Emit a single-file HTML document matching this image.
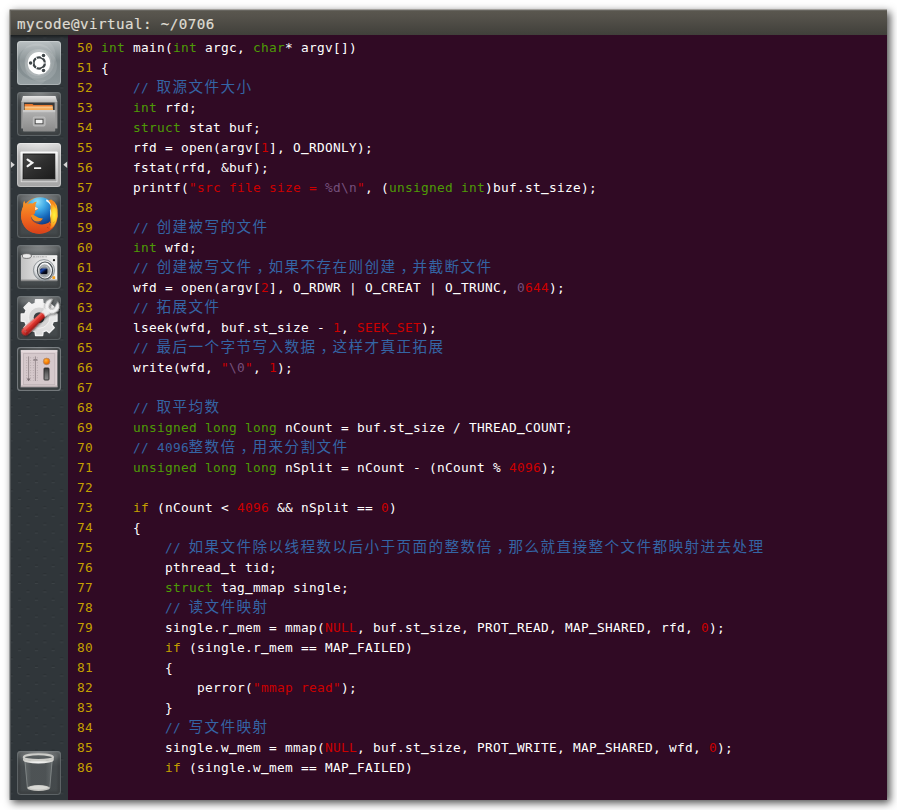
<!DOCTYPE html>
<html lang="zh">
<head>
<meta charset="utf-8">
<title>mycode@virtual: ~/0706</title>
<style>
html,body{margin:0;padding:0;background:#fff;}
body{width:897px;height:810px;position:relative;overflow:hidden;}
#shadow{position:absolute;left:11px;top:11px;width:876px;height:789px;background:#300a24;
  box-shadow:2px 2px 8px 1px rgba(0,0,0,.7);}
#title{position:absolute;left:9px;top:9px;width:878px;height:26px;
  background:linear-gradient(#5b5850,#55524b 30%,#403f3a);}
#tedge1{position:absolute;left:9px;top:9px;width:878px;height:1px;background:rgba(255,255,255,.45);}
#tedge2{position:absolute;left:9px;top:10px;width:878px;height:1px;background:#67655f;}
#tedge3{position:absolute;left:9px;top:9px;width:1px;height:26px;background:rgba(255,255,255,.45);}
#tedge4{position:absolute;left:10px;top:10px;width:1px;height:25px;background:#67655f;}
#title span{position:absolute;left:8px;top:1.5px;-webkit-text-stroke:.2px #dfdbd2;line-height:27px;color:#dfdbd2;
  font-family:"DejaVu Sans Mono","Liberation Mono",monospace;font-size:14.2px;letter-spacing:0.45px;white-space:pre;}
#lsvg{position:absolute;left:9px;top:35px;}
#term{position:absolute;left:68px;top:35px;width:819px;height:765px;background:#300a24;overflow:hidden;}
#code{position:absolute;left:9px;top:3px;color:#fff;
  font-family:"DejaVu Sans Mono","Liberation Mono","Noto Sans CJK SC",monospace;font-size:12.8px;letter-spacing:.2938px;}
.l{height:20px;line-height:20px;white-space:pre;}
.n{color:#c4a000;}
.g{color:#4e9a06;}
.b{color:#3465a4;}
.r{color:#cc0000;}
.m{color:#75507b;}
.y{color:#c4a000;}
.c{font-family:"Noto Sans CJK SC","WenQuanYi Zen Hei",sans-serif;font-size:14.6px;letter-spacing:1.4px;line-height:1px;position:relative;left:-.4px;top:.4px;}
.k{position:relative;left:4px;}
.u{position:relative;top:-1.5px;font-weight:bold;}
</style>
</head>
<body>
<div id="shadow"></div>
<div id="title"><span>mycode@virtual: ~/0706</span></div>
<div id="tedge1"></div><div id="tedge2"></div><div id="tedge3"></div><div id="tedge4"></div>
<svg id="lsvg" width="59" height="765" viewBox="9 35 59 765">
<defs>
<linearGradient id="tdark" x1="0" y1="0" x2="0" y2="1"><stop offset="0" stop-color="#5d6264"/><stop offset=".35" stop-color="#454a4d"/><stop offset="1" stop-color="#44494b"/></linearGradient>
<radialGradient id="tglow" cx=".5" cy="0" r=".6" gradientTransform="translate(0 0) scale(1 .5)"><stop offset="0" stop-color="#fff" stop-opacity=".38"/><stop offset="1" stop-color="#fff" stop-opacity="0"/></radialGradient>
<linearGradient id="tbfb" x1="0" y1="0" x2="0" y2="1"><stop offset="0" stop-color="#b4bbbd"/><stop offset=".45" stop-color="#7e888b"/><stop offset="1" stop-color="#8d979a"/></linearGradient>
<linearGradient id="tlight" x1="0" y1="0" x2="0" y2="1"><stop offset="0" stop-color="#d6d6d6"/><stop offset=".3" stop-color="#b4b4b4"/><stop offset="1" stop-color="#a6a6a6"/></linearGradient>
<linearGradient id="lid" x1="0" y1="0" x2="0" y2="1"><stop offset="0" stop-color="#e6e6e6"/><stop offset="1" stop-color="#b9b9b9"/></linearGradient>
<linearGradient id="drawer" x1="0" y1="0" x2="0" y2="1"><stop offset="0" stop-color="#c2c2c2"/><stop offset=".15" stop-color="#ababab"/><stop offset="1" stop-color="#8a8a8a"/></linearGradient>
<linearGradient id="folder" x1="0" y1="0" x2="0" y2="1"><stop offset="0" stop-color="#e0702c"/><stop offset=".45" stop-color="#f08c3c"/><stop offset=".55" stop-color="#f8b870"/><stop offset="1" stop-color="#f4a652"/></linearGradient>
<linearGradient id="tframe" x1="0" y1="0" x2="0" y2="1"><stop offset="0" stop-color="#f4f4f4"/><stop offset="1" stop-color="#9c9c9c"/></linearGradient>
<linearGradient id="tscreen" x1="0" y1="0" x2="1" y2="1"><stop offset="0" stop-color="#4a4a4a"/><stop offset=".5" stop-color="#2e2e2e"/><stop offset="1" stop-color="#1c1c1c"/></linearGradient>
<radialGradient id="globe" cx=".4" cy=".15" r=".95"><stop offset="0" stop-color="#8fe0fa"/><stop offset=".3" stop-color="#3fa9e6"/><stop offset=".6" stop-color="#1565b8"/><stop offset="1" stop-color="#0a1f5c"/></radialGradient>
<linearGradient id="fox" x1="0" y1="0" x2="0" y2="1"><stop offset="0" stop-color="#f89a2a"/><stop offset=".5" stop-color="#f06c1e"/><stop offset="1" stop-color="#d9421a"/></linearGradient>
<radialGradient id="tail" gradientUnits="userSpaceOnUse" cx="54.2" cy="215" r="13" gradientTransform="translate(54.2 215) scale(.42 1) translate(-54.2 -215)"><stop offset="0" stop-color="#fff03c"/><stop offset=".45" stop-color="#ffd22e"/><stop offset="1" stop-color="#f58a1e"/></radialGradient>
<linearGradient id="cam" x1="0" y1="0" x2="1" y2="0"><stop offset="0" stop-color="#c2c2c2"/><stop offset=".45" stop-color="#dedede"/><stop offset="1" stop-color="#f0f0f0"/></linearGradient>
<radialGradient id="lens" cx=".5" cy=".4" r=".6"><stop offset="0" stop-color="#ffffff"/><stop offset=".7" stop-color="#e2e4e6"/><stop offset="1" stop-color="#9aa0a6"/></radialGradient>
<linearGradient id="lensglass" x1="0" y1="0" x2="1" y2="1"><stop offset="0" stop-color="#0a1440"/><stop offset=".3" stop-color="#1848b0"/><stop offset=".6" stop-color="#050a20"/><stop offset="1" stop-color="#000"/></linearGradient>
<linearGradient id="gearg" x1="0" y1="0" x2="0" y2="1"><stop offset="0" stop-color="#f6f6f6"/><stop offset="1" stop-color="#dcdcdc"/></linearGradient>
<linearGradient id="wr" x1="0" y1="0" x2="0" y2="1"><stop offset="0" stop-color="#ee5048"/><stop offset=".5" stop-color="#d8302a"/><stop offset="1" stop-color="#b02020"/></linearGradient>
<radialGradient id="led" cx=".4" cy=".35" r=".7"><stop offset="0" stop-color="#ffb43c"/><stop offset=".6" stop-color="#f57a00"/><stop offset="1" stop-color="#c85a00"/></radialGradient>
<linearGradient id="sw" x1="0" y1="0" x2="0" y2="1"><stop offset="0" stop-color="#333"/><stop offset=".5" stop-color="#6a6a6a"/><stop offset="1" stop-color="#8c8c8c"/></linearGradient>
<linearGradient id="rim" x1="0" y1="0" x2="0" y2="1"><stop offset="0" stop-color="#c9c9c5"/><stop offset=".5" stop-color="#e9e9e6"/><stop offset="1" stop-color="#b4b4b0"/></linearGradient>
<linearGradient id="bin" x1="0" y1="0" x2="1" y2="0"><stop offset="0" stop-color="#7e8484" stop-opacity=".55"/><stop offset=".25" stop-color="#565b5d" stop-opacity=".5"/><stop offset=".75" stop-color="#565b5d" stop-opacity=".5"/><stop offset="1" stop-color="#7e8484" stop-opacity=".55"/></linearGradient>
<radialGradient id="rimf" cx=".5" cy="1" r=".6"><stop offset="0" stop-color="#ffffff"/><stop offset="1" stop-color="#cfcfcb"/></radialGradient>
<pattern id="dots" x="9.2" y="35.5" width="16.8" height="16.8" patternUnits="userSpaceOnUse"><rect x="0.5" y="0" width="3" height="1" fill="#000" fill-opacity=".12"/><rect x="0.5" y="1.6" width="3" height=".8" fill="#fff" fill-opacity=".07"/><rect x="8.9" y="8.4" width="3" height="1" fill="#000" fill-opacity=".12"/><rect x="8.9" y="10" width="3" height=".8" fill="#fff" fill-opacity=".07"/></pattern>
<linearGradient id="topsh" x1="0" y1="0" x2="0" y2="1"><stop offset="0" stop-color="#000" stop-opacity=".45"/><stop offset="1" stop-color="#000" stop-opacity="0"/></linearGradient>
<linearGradient id="leftedge" x1="0" y1="0" x2="1" y2="0"><stop offset="0" stop-color="#30363a" stop-opacity=".12"/><stop offset=".5" stop-color="#33383b" stop-opacity=".55"/><stop offset="1" stop-color="#30363a" stop-opacity="1"/></linearGradient>
<filter id="b1" x="-20%" y="-20%" width="140%" height="140%"><feGaussianBlur stdDeviation="1"/></filter>
<filter id="ds" x="-30%" y="-30%" width="160%" height="160%"><feGaussianBlur in="SourceAlpha" stdDeviation=".9"/><feOffset dx=".3" dy=".8"/><feComponentTransfer><feFuncA type="linear" slope=".8"/></feComponentTransfer><feMerge><feMergeNode/><feMergeNode in="SourceGraphic"/></feMerge></filter>
</defs>
<rect x="11" y="35" width="57" height="765" fill="#30363a"/>
<rect x="11" y="35" width="57" height="765" fill="url(#dots)"/>
<rect x="9" y="35" width="2" height="765" fill="url(#leftedge)"/>
<rect x="11" y="35" width="57" height="4" fill="url(#topsh)"/>

<g>
<rect x="17" y="41" width="44" height="44" rx="3.5" fill="url(#tbfb)"/>
<clipPath id="c1"><rect x="17" y="41" width="44" height="44" rx="3.5"/></clipPath>
<g clip-path="url(#c1)"><path d="M17 62 Q18 47 36 46 Q53 46 55 62 Q58 48 48 41 L17 41 Z" fill="#fff" fill-opacity=".10"/><circle cx="37" cy="61" r="17.5" fill="#fff" fill-opacity=".12"/><circle cx="41" cy="65.5" r="16" fill="#fff" fill-opacity=".12"/><circle cx="38" cy="62.5" r="13.4" fill="#fff" fill-opacity=".16"/><path d="M17 85 L17 68 Q26 84 46 80 Q40 88 30 85 Z" fill="#fff" fill-opacity=".10"/></g>
<rect x="17.5" y="41.5" width="43" height="43" rx="3" fill="none" stroke="#fff" stroke-opacity=".25"/>
<circle cx="39" cy="63.2" r="11.2" fill="#fff"/>
<circle cx="39.2" cy="63.0" r="5.7" fill="none" stroke="#3e4548" stroke-width="2.3"/>
<circle cx="43.50" cy="55.55" r="2.7" fill="#fff"/>
<circle cx="43.50" cy="55.55" r="1.75" fill="#3e4548"/>
<circle cx="30.60" cy="63.00" r="2.7" fill="#fff"/>
<circle cx="30.60" cy="63.00" r="1.75" fill="#3e4548"/>
<circle cx="43.50" cy="70.45" r="2.7" fill="#fff"/>
<circle cx="43.50" cy="70.45" r="1.75" fill="#3e4548"/>
<line x1="37.30" y1="66.29" x2="35.40" y2="69.58" stroke="#fff" stroke-width="1"/>
<line x1="43.00" y1="63.00" x2="46.80" y2="63.00" stroke="#fff" stroke-width="1"/>
<line x1="37.30" y1="59.71" x2="35.40" y2="56.42" stroke="#fff" stroke-width="1"/>
</g>
<g><rect x="17" y="92" width="44" height="44" rx="3.5" fill="url(#tdark)"/><rect x="17" y="92" width="44" height="44" rx="3.5" fill="url(#tglow)"/><rect x="19" y="94.0" width="40" height="40" rx="2.5" fill="none" stroke="#000" stroke-opacity=".16" stroke-width="2.4" filter="url(#b1)"/><rect x="17.5" y="92.5" width="43" height="43" rx="3" fill="none" stroke="#70767a" stroke-opacity=".6"/>
<rect x="21.2" y="101.5" width="36.2" height="27" fill="#9a9a9a"/>
<path d="M23 96 H55.5 L57.4 102 H21.2 Z" fill="url(#lid)"/>
<rect x="24" y="102.6" width="30.6" height="8" fill="#3a3a3a"/>
<path d="M24.6 104 H32.5 L33.5 105 H52.5 L53.2 110.4 H24.6 Z" fill="url(#folder)"/>
<rect x="24.6" y="106.6" width="28.4" height=".8" fill="#fde3c0" fill-opacity=".8"/>
<rect x="23" y="110.3" width="32.2" height="21.2" rx=".8" fill="url(#drawer)"/>
<rect x="23" y="110.3" width="32.2" height="1.2" fill="#d8d8d8"/>
<rect x="33.3" y="117" width="11.8" height="9" rx="1.4" fill="#b2b2b2" stroke="#c4c4c4" stroke-width=".8"/>
<rect x="35.2" y="119.2" width="7.8" height="4.6" fill="#f2f2f2" stroke="#444" stroke-width=".9"/>
</g>
<g>
<rect x="17" y="143" width="44" height="44" rx="3.5" fill="url(#tlight)"/>
<rect x="17" y="143" width="44" height="44" rx="3.5" fill="url(#tglow)"/>
<rect x="17.5" y="143.5" width="43" height="43" rx="3" fill="none" stroke="#fff" stroke-opacity=".3"/>
<rect x="20.5" y="151.6" width="37.2" height="31" rx="1" fill="url(#tframe)"/>
<rect x="21.2" y="152.4" width="35.8" height="29.4" fill="none" stroke="#fff" stroke-opacity=".7" stroke-width=".9"/>
<rect x="23.2" y="154" width="31.6" height="24.8" fill="url(#tscreen)" stroke="#111" stroke-width=".8"/>
<path d="M27.6 159.6 L32.3 162.8 L27.6 166.2" fill="none" stroke="#f4f4f4" stroke-width="2.2" stroke-linecap="round" stroke-linejoin="miter"/>
<rect x="34" y="167.2" width="7.2" height="1.8" rx=".6" fill="#f4f4f4"/>
<path d="M10.9 161.6 L14.8 164.8 L10.9 168 Z" fill="#d6d6d6"/>
<path d="M67.2 161.6 L63.3 164.8 L67.2 168 Z" fill="#d6d6d6"/>
</g>
<g><rect x="17" y="194" width="44" height="44" rx="3.5" fill="url(#tdark)"/><rect x="17" y="194" width="44" height="44" rx="3.5" fill="url(#tglow)"/><rect x="19" y="196.0" width="40" height="40" rx="2.5" fill="none" stroke="#000" stroke-opacity=".16" stroke-width="2.4" filter="url(#b1)"/><rect x="17.5" y="194.5" width="43" height="43" rx="3" fill="none" stroke="#70767a" stroke-opacity=".6"/>
<circle cx="39.3" cy="215.7" r="18.3" fill="url(#fox)"/>
<circle cx="40.2" cy="212.2" r="15" fill="url(#globe)"/>
<path d="M51.2 199.4 Q55.2 201.4 56.8 205.6 Q58.2 210 57.6 216.5 Q56.8 222 53.6 226.6 Q51.6 228.6 50.2 228.4 Q51 225 50.6 222 Q50.6 219 50 215.5 Q51.2 211 50.4 207 Q50.8 203 48.2 200.6 Z" fill="url(#tail)"/>
<path d="M46.6 199.2 Q50.6 201.6 51.4 206.4 Q49.8 203 46 201 Z" fill="#fff" fill-opacity=".92"/>
<path d="M50.6 208.5 Q52 213 50.8 218 Q49.9 213.5 50 210.5 Z" fill="#fff" fill-opacity=".75"/>
<path d="M52.6 201.2 Q55.4 204.2 55.8 208.6 Q54 204.8 52 203 Z" fill="#f58220" fill-opacity=".9"/>
<path d="M24.2 200.6 Q25 203.6 26.6 204.6 Q29.6 202.8 32.6 203.4 Q34.4 201.6 36.8 201.8 Q35 204.2 35.4 206.6 Q36.8 208 38.2 208.4 Q37.4 210.2 35.2 210.8 Q35.6 213 34 214.4 Q31.6 215 31 217.6 Q32.6 222.2 37 223.4 Q42.5 225.6 48 223 Q49.6 222.2 50.4 220.6 Q50 228 44 232 Q34 235.6 26.4 229 Q20.6 222.6 21.2 213.6 Q21.6 208.6 23 206.4 Q22.8 203 24.2 200.6 Z" fill="url(#fox)"/>
<path d="M30.8 215.4 Q33 213.8 35 215.8 Q38.6 218.6 43 218.4 Q40.6 221.8 36.4 221.6 Q32.4 220.6 30.8 215.4 Z" fill="#f7901e"/>
<path d="M31 217.6 Q33.4 221.6 38 222 Q41 221.8 43 218.4 Q41 223.6 36.6 223.4 Q32 222.4 31 217.6 Z" fill="#c2410c" fill-opacity=".55"/>
<path d="M35.3 206.8 Q37 208 38.2 208.4 Q36.8 209.8 35 210 Z" fill="#fde8d0"/>
<path d="M47.4 227.4 l.9 .5 M49.6 224.6 l.8 .4 M53.6 222.6 l.7 -.6" stroke="#3a1a10" stroke-width=".6" stroke-opacity=".7"/>
</g>
<g><rect x="17" y="245" width="44" height="44" rx="3.5" fill="url(#tdark)"/><rect x="17" y="245" width="44" height="44" rx="3.5" fill="url(#tglow)"/><rect x="19" y="247.0" width="40" height="40" rx="2.5" fill="none" stroke="#000" stroke-opacity=".16" stroke-width="2.4" filter="url(#b1)"/><rect x="17.5" y="245.5" width="43" height="43" rx="3" fill="none" stroke="#70767a" stroke-opacity=".6"/>
<rect x="20.9" y="255.4" width="36.4" height="25.6" rx="1" fill="url(#cam)"/>
<rect x="20.9" y="279.6" width="36.4" height="1.6" fill="#8a8a8a"/>
<rect x="20.9" y="255.4" width="36.4" height="1" fill="#fafafa"/>
<ellipse cx="26.8" cy="256" rx="4.6" ry="2.4" fill="#ececec" stroke="#5a5a5a" stroke-width=".8"/>
<path d="M33 256.8 H47" stroke="#888" stroke-width=".7" stroke-dasharray="2 .8 1 .6"/>
<circle cx="54" cy="260.2" r="1.1" fill="#111"/>
<circle cx="44" cy="270.2" r="10.6" fill="url(#lens)" stroke="#80868a" stroke-width=".8"/>
<ellipse cx="45" cy="270.6" rx="7.6" ry="8.6" fill="#f4f5f6" stroke="#4a5054" stroke-width="1.2"/>
<ellipse cx="44.6" cy="271" rx="5.6" ry="6.2" fill="#b4b9bd" stroke="#7e8488" stroke-width=".7"/><ellipse cx="44.4" cy="271.2" rx="4.4" ry="4.6" fill="#8a9094"/>
<rect x="40.2" y="268.4" width="7.2" height="5.6" rx="1.2" fill="url(#lensglass)"/>
<rect x="52.4" y="276.2" width="2.8" height="2.8" rx=".5" fill="#f5a01e"/>
</g>
<g><rect x="17" y="296" width="44" height="44" rx="3.5" fill="url(#tdark)"/><rect x="17" y="296" width="44" height="44" rx="3.5" fill="url(#tglow)"/><rect x="19" y="298.0" width="40" height="40" rx="2.5" fill="none" stroke="#000" stroke-opacity=".16" stroke-width="2.4" filter="url(#b1)"/><rect x="17.5" y="296.5" width="43" height="43" rx="3" fill="none" stroke="#70767a" stroke-opacity=".6"/>
<path d="M35.15 303.34 L35.57 299.74 L42.63 299.74 L43.05 303.34 L46.39 304.72 L49.23 302.48 L54.22 307.47 L51.98 310.31 L53.36 313.65 L56.96 314.07 L56.96 321.13 L53.36 321.55 L51.98 324.89 L54.22 327.73 L49.23 332.72 L46.39 330.48 L43.05 331.86 L42.63 335.46 L35.57 335.46 L35.15 331.86 L31.81 330.48 L28.97 332.72 L23.98 327.73 L26.22 324.89 L24.84 321.55 L21.24 321.13 L21.24 314.07 L24.84 313.65 L26.22 310.31 L23.98 307.47 L28.97 302.48 L31.81 304.72 Z" fill="url(#gearg)" stroke="#f2f2f2" stroke-width="1.4" stroke-linejoin="round"/>
<circle cx="39.1" cy="317.6" r="10.6" fill="#d6d6d6" stroke="#f4f4f4" stroke-width=".8"/>
<circle cx="39.1" cy="317.6" r="5.4" fill="#3b4144"/>
<g transform="translate(25.4 331.5) rotate(-43.6)" filter="url(#ds)">
<path d="M43.87 0.69 A7.30 7.30 0 1 1 42.08 -4.83 L35.23 -2.60 A2.90 2.90 0 0 0 37.02 2.91 Z" fill="#f2f2f2" stroke="#a9a9a9" stroke-width=".7"/>
<path d="M24 -2.4 L30.5 -4 L30.5 4 L24 2.4 Z" fill="#ececec"/>
<path d="M0 -3.7 L24.5 -2.7 Q26.4 0 24.5 2.7 L0 3.7 A3.7 3.7 0 0 1 0 -3.7 Z" fill="url(#wr)"/>
<rect x="-1" y="-2.6" width="25" height="1.2" rx=".6" fill="#f98a80" fill-opacity=".75"/>
<rect x="-2" y="1.7" width="26" height="1.4" rx=".7" fill="#8e1212" fill-opacity=".55"/>
<circle cx="0" cy="0" r="1.1" fill="#e9a9a2" stroke="#8a1414" stroke-width=".6"/>
</g>
</g>
<g>
<rect x="17" y="347" width="44" height="44" rx="3.5" fill="#4b5052"/>
<rect x="17" y="347" width="44" height="44" rx="3.5" fill="url(#tglow)"/>
<rect x="17.6" y="347.6" width="42.8" height="42.8" rx="3" fill="none" stroke="#80868a" stroke-width="1.2" stroke-opacity=".75"/>
<rect x="19" y="349" width="40" height="40" rx="2" fill="none" stroke="#2d3235" stroke-width="1.6" stroke-opacity=".7"/>
<rect x="20.9" y="350.3" width="36.4" height="36.8" fill="#ddd0d3"/>
<rect x="20.9" y="350.3" width="36.4" height="1.2" fill="#efe6e8"/>
<rect x="20.9" y="385.6" width="36.4" height="1.5" fill="#b9adb0"/>
<rect x="23.4" y="353.6" width="31.4" height="31" fill="#d5c8cb" stroke="#bfb2b6" stroke-width=".8"/>
<path d="M28.6 356.4 V381" stroke="#8a7d81" stroke-width=".8"/>
<path d="M35.4 356.4 V381" stroke="#8a7d81" stroke-width=".8"/>
<path d="M26.6 357.5 V380.5 M30.6 357.5 V380.5 M33.4 357.5 V380.5 M37.4 357.5 V380.5" stroke="#9c8f93" stroke-width=".7" stroke-dasharray=".7 1.8"/>
<path d="M26.6 378.4 H30.6 L28.6 381.2 Z" fill="#7a6e72"/>
<rect x="33.4" y="359" width="4" height="1.8" fill="#94888c"/>
<circle cx="46.6" cy="361.4" r="3.3" fill="url(#led)" stroke="#a88878" stroke-width=".7"/>
<rect x="44" y="368" width="5" height="12" rx=".8" fill="url(#sw)" stroke="#2a2a2a" stroke-width=".9"/>
</g>
<g><rect x="17" y="751" width="44" height="44" rx="3.5" fill="url(#tdark)"/><rect x="17" y="751" width="44" height="44" rx="3.5" fill="url(#tglow)"/><rect x="19" y="753.0" width="40" height="40" rx="2.5" fill="none" stroke="#000" stroke-opacity=".16" stroke-width="2.4" filter="url(#b1)"/><rect x="17.5" y="751.5" width="43" height="43" rx="3" fill="none" stroke="#70767a" stroke-opacity=".6"/>
<path d="M24.4 759 L27.2 788 Q38.6 792.4 50 788 L52.6 759 Z" fill="url(#bin)"/>
<path d="M24.8 760 L27.4 788" stroke="#b4b8b8" stroke-opacity=".5" stroke-width=".8"/>
<path d="M52.2 760 L49.8 788" stroke="#b4b8b8" stroke-opacity=".5" stroke-width=".8"/>
<ellipse cx="38.6" cy="788" rx="11.4" ry="3" fill="#c4c4c0"/>
<ellipse cx="38.6" cy="787.5" rx="9.4" ry="1.9" fill="#d9d9d5"/>
<ellipse cx="38.4" cy="757.2" rx="14.6" ry="2.9" fill="#4c5153" fill-opacity=".7" stroke="#cdcdc9" stroke-width="2"/>
<path d="M22.9 757.4 A15.5 3.6 0 0 0 53.9 757.4 L53.7 759.9 A15.3 3.6 0 0 1 23.1 759.9 Z" fill="url(#rimf)"/>
</g>
</svg>
<div id="term">
<div id="code">
<div class="l"><span class="n">50</span> <span class="g">int</span> main(<span class="g">int</span> argc, <span class="g">char</span>* argv[])</div>
<div class="l"><span class="n">51</span> {</div>
<div class="l"><span class="n">52</span>     <span class="b">// <span class="c">取源文件大小</span></span></div>
<div class="l"><span class="n">53</span>     <span class="g">int</span> rfd;</div>
<div class="l"><span class="n">54</span>     <span class="g">struct</span> stat buf;</div>
<div class="l"><span class="n">55</span>     rfd = open(argv[<span class="r">1</span>], O<span class="u">_</span>RDONLY);</div>
<div class="l"><span class="n">56</span>     fstat(rfd, &amp;buf);</div>
<div class="l"><span class="n">57</span>     printf(<span class="r">"src file size = </span><span class="m">%d\n</span><span class="r">"</span>, (<span class="g">unsigned int</span>)buf.st<span class="u">_</span>size);</div>
<div class="l"><span class="n">58</span> </div>
<div class="l"><span class="n">59</span>     <span class="b">// <span class="c">创建被写的文件</span></span></div>
<div class="l"><span class="n">60</span>     <span class="g">int</span> wfd;</div>
<div class="l"><span class="n">61</span>     <span class="b">// <span class="c">创建被写文件<span class="k">，</span>如果不存在则创建<span class="k">，</span>并截断文件</span></span></div>
<div class="l"><span class="n">62</span>     wfd = open(argv[<span class="r">2</span>], O<span class="u">_</span>RDWR | O<span class="u">_</span>CREAT | O<span class="u">_</span>TRUNC, <span class="m">0</span><span class="r">644</span>);</div>
<div class="l"><span class="n">63</span>     <span class="b">// <span class="c">拓展文件</span></span></div>
<div class="l"><span class="n">64</span>     lseek(wfd, buf.st<span class="u">_</span>size - <span class="r">1</span>, <span class="r">SEEK<span class="u">_</span>SET</span>);</div>
<div class="l"><span class="n">65</span>     <span class="b">// <span class="c">最后一个字节写入数据<span class="k">，</span>这样才真正拓展</span></span></div>
<div class="l"><span class="n">66</span>     write(wfd, <span class="r">"</span><span class="m">\0</span><span class="r">"</span>, <span class="r">1</span>);</div>
<div class="l"><span class="n">67</span> </div>
<div class="l"><span class="n">68</span>     <span class="b">// <span class="c">取平均数</span></span></div>
<div class="l"><span class="n">69</span>     <span class="g">unsigned long long</span> nCount = buf.st<span class="u">_</span>size / THREAD<span class="u">_</span>COUNT;</div>
<div class="l"><span class="n">70</span>     <span class="b">// 4096<span class="c">整数倍<span class="k">，</span>用来分割文件</span></span></div>
<div class="l"><span class="n">71</span>     <span class="g">unsigned long long</span> nSplit = nCount - (nCount % <span class="r">4096</span>);</div>
<div class="l"><span class="n">72</span> </div>
<div class="l"><span class="n">73</span>     <span class="y">if</span> (nCount &lt; <span class="r">4096</span> &amp;&amp; nSplit == <span class="r">0</span>)</div>
<div class="l"><span class="n">74</span>     {</div>
<div class="l"><span class="n">75</span>         <span class="b">// <span class="c">如果文件除以线程数以后小于页面的整数倍<span class="k">，</span>那么就直接整个文件都映射进去处理</span></span></div>
<div class="l"><span class="n">76</span>         pthread<span class="u">_</span>t tid;</div>
<div class="l"><span class="n">77</span>         <span class="g">struct</span> tag<span class="u">_</span>mmap single;</div>
<div class="l"><span class="n">78</span>         <span class="b">// <span class="c">读文件映射</span></span></div>
<div class="l"><span class="n">79</span>         single.r<span class="u">_</span>mem = mmap(<span class="r">NULL</span>, buf.st<span class="u">_</span>size, PROT<span class="u">_</span>READ, MAP<span class="u">_</span>SHARED, rfd, <span class="r">0</span>);</div>
<div class="l"><span class="n">80</span>         <span class="y">if</span> (single.r<span class="u">_</span>mem == MAP<span class="u">_</span>FAILED)</div>
<div class="l"><span class="n">81</span>         {</div>
<div class="l"><span class="n">82</span>             perror(<span class="r">"mmap read"</span>);</div>
<div class="l"><span class="n">83</span>         }</div>
<div class="l"><span class="n">84</span>         <span class="b">// <span class="c">写文件映射</span></span></div>
<div class="l"><span class="n">85</span>         single.w<span class="u">_</span>mem = mmap(<span class="r">NULL</span>, buf.st<span class="u">_</span>size, PROT<span class="u">_</span>WRITE, MAP<span class="u">_</span>SHARED, wfd, <span class="r">0</span>);</div>
<div class="l"><span class="n">86</span>         <span class="y">if</span> (single.w<span class="u">_</span>mem == MAP<span class="u">_</span>FAILED)</div>
</div>
</div>
</body>
</html>
